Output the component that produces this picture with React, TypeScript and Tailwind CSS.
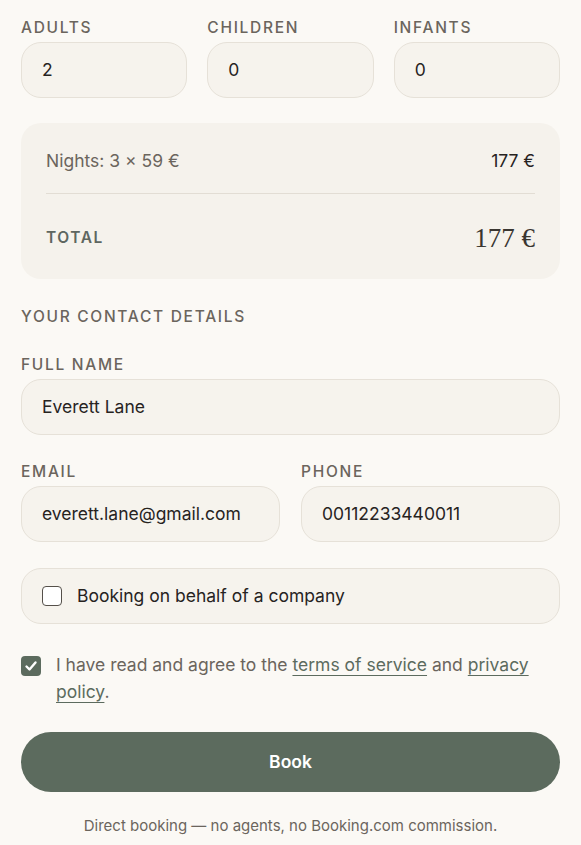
import React from "react";

const label = "block text-[15.5px] font-medium uppercase tracking-[0.11em] text-[#6b655d] leading-[20px]";
const input = "w-full h-[56px] rounded-[20px] border border-[#e6e1d8] bg-[#f6f3ed] px-[20px] text-[17.5px] text-[#27231f] flex items-center";

export default function App() {
  return (
    <div className="min-h-[845px] bg-[#fbf9f5] px-[21px] pt-[18px] pb-[8px]" style={{ fontFamily: "Inter, 'Noto Sans', sans-serif" }}>
      <div className="grid grid-cols-3 gap-x-[20px]">
        {[
          ["Adults", "2"],
          ["Children", "0"],
          ["Infants", "0"],
        ].map(([l, v]) => (
          <div key={l}>
            <span className={label}>{l}</span>
            <div className={input + " mt-[4px]"}>{v}</div>
          </div>
        ))}
      </div>

      <div className="mt-[25px] rounded-[20px] bg-[#f5f2ec] px-[25px] pt-[27px] pb-[24px]">
        <div className="flex items-center justify-between h-[22px]">
          <span className="text-[17.5px] text-[#6b655d]">Nights: 3 × 59 €</span>
          <span className="text-[17.5px] text-[#27231f]">177 €</span>
        </div>
        <div className="mt-[21px] border-t border-[#e2ddd4]" />
        <div className="mt-[27px] flex items-center justify-between h-[34px]">
          <span className="text-[15.5px] font-semibold uppercase tracking-[0.1em] text-[#5e6660]">Total</span>
          <span className="text-[27px] text-[#3a3631]" style={{ fontFamily: "'Liberation Serif', 'DejaVu Serif', serif", fontVariantNumeric: "oldstyle-nums" }}>177 €</span>
        </div>
      </div>

      <div className="mt-[28px]">
        <span className={label}>Your contact details</span>
      </div>

      <div className="mt-[28px]">
        <span className={label}>Full name</span>
        <div className={input + " mt-[4px]"}>Everett Lane</div>
      </div>

      <div className="mt-[27px] grid grid-cols-2 gap-x-[21px]">
        <div>
          <span className={label}>Email</span>
          <div className={input + " mt-[4px]"}>everett.lane@gmail.com</div>
        </div>
        <div>
          <span className={label}>Phone</span>
          <div className={input + " mt-[4px]"}>00112233440011</div>
        </div>
      </div>

      <div className={input + " mt-[26px] gap-[15px]"}>
        <span className="w-[20px] h-[20px] rounded-[4px] border-[1.5px] border-[#55504a] bg-white shrink-0" />
        <span className="text-[17.5px] text-[#27231f]">Booking on behalf of a company</span>
      </div>

      <div className="mt-[27px] flex items-start gap-[15px]">
        <span className="mt-[5px] w-[20px] h-[20px] rounded-[4px] bg-[#5c6b5e] shrink-0 flex items-center justify-center">
          <svg width="14" height="14" viewBox="0 0 14 14" fill="none">
            <path d="M2.5 7.5 L5.5 10.5 L11.5 3.5" stroke="white" strokeWidth="2.4" strokeLinecap="round" strokeLinejoin="round" />
          </svg>
        </span>
        <p className="text-[17.5px] leading-[27px] text-[#6b655d]">
          I have read and agree to the{" "}
          <a className="underline underline-offset-[4px] decoration-[#5c6b5e] text-[#5c6b5e]">terms of service</a> and{" "}
          <a className="underline underline-offset-[4px] decoration-[#5c6b5e] text-[#5c6b5e]">privacy policy</a>.
        </p>
      </div>

      <button className="mt-[27px] w-full h-[60px] rounded-full bg-[#5c6b5e] text-white text-[17.5px] font-semibold">
        Book
      </button>

      <p className="mt-[23px] text-center text-[15px] text-[#6b655d]">
        Direct booking — no agents, no Booking.com commission.
      </p>
    </div>
  );
}
